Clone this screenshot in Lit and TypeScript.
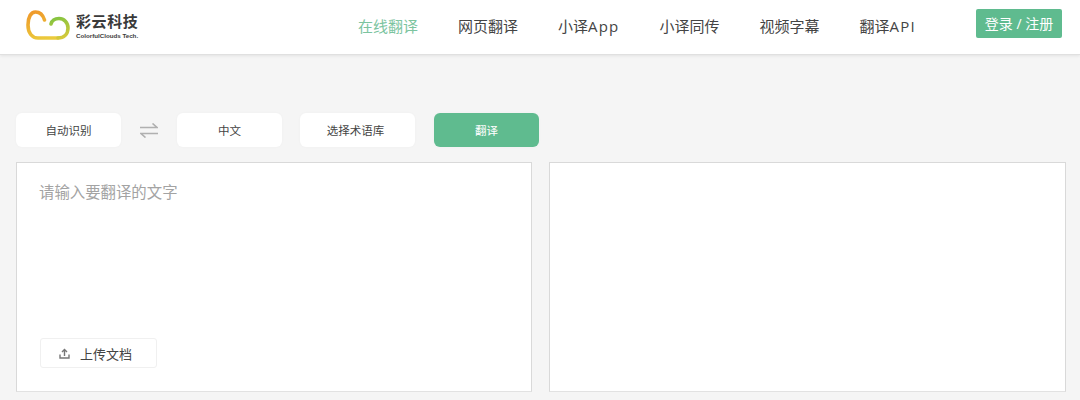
import { html, css, LitElement } from "lit"
import { customElement } from "lit/decorators.js"

const NAV = [
  ["在线翻译", ""],
  ["网页翻译", ""],
  ["小译", "App"],
  ["小译同传", ""],
  ["视频字幕", ""],
  ["翻译", "API"],
]

@customElement("app-root")
export class AppRoot extends LitElement {
  static styles = css`
    :host {
      display: block;
      height: 400px;
      overflow: hidden;
      background: #f5f5f5;
      font-family: "Open Sans", "Noto Sans CJK SC", sans-serif;
      color: #444;
    }

    header {
      height: 55px;
      box-sizing: border-box;
      background: #fff;
      border-bottom: 1px solid #e0e0e0;
      box-shadow: 0 1px 3px rgba(0, 0, 0, 0.08);
      display: flex;
      align-items: flex-start;
      padding: 9px 18px 0 26px;
    }

    .logo {
      display: flex;
      gap: 6px;
      width: 332px;
    }

    .logo svg {
      margin-top: 1px;
    }

    .logo-text {
      display: flex;
      flex-direction: column;
      color: #3a3a3a;
    }

    .logo-cn {
      font-size: 15px;
      font-weight: 700;
      line-height: 20px;
      letter-spacing: 0.6px;
      margin-top: 2px;
    }

    .logo-en {
      font-family: "Liberation Sans", sans-serif;
      font-size: 6.200px;
      font-weight: 700;
      line-height: 8px;
      margin-top: 1px;
    }

    nav {
      display: flex;
      gap: 40px;
      flex: 1;
      font-size: 15px;
      line-height: 20px;
      padding-top: 7px;
    }

    nav a {
      white-space: nowrap;
    }

    nav a.active {
      color: #7cc49f;
    }

    .latin {
      letter-spacing: 1.200px;
    }

    .login {
      width: 86px;
      height: 29px;
      border-radius: 2px;
      background: #5fbb8f;
      color: #fff;
      font-size: 14px;
      line-height: 29px;
      text-align: center;
      white-space: nowrap;
    }

    main {
      padding: 58px 14px 0 16px;
    }

    .toolbar {
      display: flex;
      align-items: center;
      height: 34px;
    }

    .btn {
      height: 34px;
      box-sizing: border-box;
      border-radius: 6px;
      background: #fff;
      box-shadow: 0 0 3px rgba(0, 0, 0, 0.03);
      font-size: 11.500px;
      display: flex;
      align-items: center;
      justify-content: center;
      width: 105px;
    }

    .swap {
      width: 56px;
      display: flex;
      justify-content: center;
    }

    .terms {
      width: 115px;
      margin: 0 19px 0 18px;
      padding-right: 4px;
    }

    .go {
      background: #5fbb8f;
      color: #fff;
    }

    .panels {
      display: flex;
      gap: 17px;
      margin-top: 15px;
    }

    .panel {
      flex: 1;
      height: 230px;
      box-sizing: border-box;
      background: #fff;
      border: 1px solid #d9d9d9;
      border-bottom-color: #e2e2e2;
      display: flex;
      flex-direction: column;
      justify-content: space-between;
      padding: 20px 22px 23px 22px;
    }

    .panel.source {
      flex: 0 0 516px;
    }

    .placeholder {
      font-size: 15.400px;
      line-height: 20px;
      color: #a3a3a3;
    }

    .upload {
      width: 117px;
      height: 30px;
      margin-left: 1px;
      box-sizing: border-box;
      border: 1px solid #f0f0f0;
      border-radius: 3px;
      font-size: 13px;
      display: flex;
      align-items: center;
      gap: 10px;
      padding-left: 18px;
    }
  `

  render() {
    return html`
      <header>
        <div class="logo">
          <svg width="44" height="30" viewBox="0 0 44 30" fill="none" stroke-width="3.600" stroke-linecap="round">
            <defs>
              <linearGradient id="warm" gradientUnits="userSpaceOnUse" x1="10" y1="0" x2="18" y2="30">
                <stop offset="0" stop-color="#ef982a" />
                <stop offset="1" stop-color="#ebcb3c" />
              </linearGradient>
              <linearGradient id="leaf" gradientUnits="userSpaceOnUse" x1="30" y1="8" x2="36" y2="30">
                <stop offset="0" stop-color="#86c440" />
                <stop offset="1" stop-color="#dcc93a" />
              </linearGradient>
            </defs>
            <path d="M18.500 10C17 5 14 2 9.500 2C5 2 2 7 2 15C2 23 6 28 12 28H32" stroke="url(#warm)" />
            <path d="M25 14C26 10.500 29 8.500 33 8.500C38 8.500 42 12.500 42 18C42 24 38 28 32 28" stroke="url(#leaf)" />
          </svg>
          <div class="logo-text">
            <span class="logo-cn">彩云科技</span>
            <span class="logo-en">ColorfulClouds Tech.</span>
          </div>
        </div>
        <nav>
          ${NAV.map(
            ([cn, latin], i) =>
              html`<a class=${i === 0 ? "active" : ""}>${cn}<span class="latin">${latin}</span></a>`
          )}
        </nav>
        <div class="login">登录 / 注册</div>
      </header>
      <main>
        <div class="toolbar">
          <div class="btn">自动识别</div>
          <div class="swap">
            <svg width="18" height="15" viewBox="0 0 18 15" fill="none" stroke="#b0b0b0" stroke-width="1.600">
              <path d="M0 4.500H17L12.500 0.500" />
              <path d="M18 10.500H1L5.500 14.500" />
            </svg>
          </div>
          <div class="btn">中文</div>
          <div class="btn terms">选择术语库</div>
          <div class="btn go">翻译</div>
        </div>
        <div class="panels">
          <div class="panel source">
            <div class="placeholder">请输入要翻译的文字</div>
            <div class="upload">
              <svg width="11" height="11" viewBox="0 0 11 11" fill="none" stroke="#777" stroke-width="1.400">
                <path d="M5.500 8V1.500M3 4L5.500 1.500L8 4" />
                <path d="M1 6.500V10H10V6.500" />
              </svg>
              <span>上传文档</span>
            </div>
          </div>
          <div class="panel"></div>
        </div>
      </main>
    `
  }
}
